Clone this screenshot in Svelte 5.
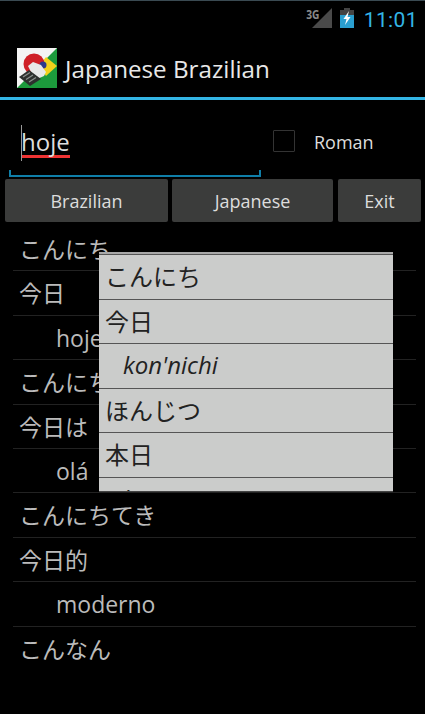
<script>
  const rows = [
    { text: 'こんにち' },
    { text: '今日' },
    { text: 'hoje', sub: true },
    { text: 'こんにちは' },
    { text: '今日は' },
    { text: 'olá', sub: true },
    { text: 'こんにちてき' },
    { text: '今日的' },
    { text: 'moderno', sub: true },
    { text: 'こんなん', last: true }
  ];
  const popup = [
    { text: 'こんにち' },
    { text: '今日' },
    { text: "kon'nichi", roman: true },
    { text: 'ほんじつ' },
    { text: '本日' },
    { text: 'honjitsu', roman: true }
  ];
</script>

<div class="screen">
  <header class="status">
    <span class="net">3G</span>
    <svg class="signal" width="20" height="20" viewBox="0 0 20 20"><path d="M20 0V20H0Z" fill="#4a4a4a" /></svg>
    <svg class="battery" width="14" height="20" viewBox="0 0 14 20">
      <rect x="4" y="0" width="6" height="2" fill="#444" />
      <rect x="0" y="2" width="14" height="6" fill="#444" />
      <rect x="0" y="7" width="14" height="13" fill="#2a9fd0" />
      <path d="M9 3 3.5 11H6.5L5 17 10.5 9H7.5Z" fill="#fff" />
    </svg>
    <span class="clock">11:01</span>
  </header>

  <div class="titlebar">
    <svg class="logo" width="40" height="40" viewBox="0 0 40 40">
      <rect width="40" height="40" fill="#f4f4f4" />
      <path d="M40 0V40H0Z" fill="#1c9a3c" />
      <path d="M29 9 40 18 29 28 22 18Z" fill="#f2d21c" />
      <circle cx="17" cy="16" r="10.5" fill="#cf2027" />
      <circle cx="26" cy="17" r="3.5" fill="#2b3a8c" />
      <path d="M11 18 16 14 24 17 29 24 27 28 18 32Z" fill="#e8e8e8" />
      <path d="M2 29 12 22 24 31 13 38Z" fill="#2d302e" />
      <path d="M6 29 13 24.5M9 31.5 16 27M12 34 19 29.5" stroke="#8a8f8c" stroke-width="1.3" fill="none" />
    </svg>
    <span class="apptitle">Japanese Brazilian</span>
  </div>

  <div class="search">
    <div class="field">
      <span class="query"><span class="caret"></span>hoje</span>
    </div>
    <span class="box"></span>
    <span class="roman">Roman</span>
  </div>

  <div class="buttons">
    <button class="btn b1">Brazilian</button>
    <button class="btn b2">Japanese</button>
    <button class="btn b3">Exit</button>
  </div>

  <div class="results">
    <ul class="list">
      {#each rows as row}
        <li class="row" class:sub={row.sub} class:last={row.last}>{row.text}</li>
      {/each}
    </ul>
    <div class="popup">
      {#each popup as item}
        <div class="pop-row" class:ital={item.roman}>{item.text}</div>
      {/each}
    </div>
  </div>
</div>

<style>
  :global(body) {
    margin: 0;
    background: #000;
  }
  .screen {
    width: 425px;
    height: 714px;
    background: #000;
    overflow: hidden;
    font-family: "Open Sans", "Noto Sans CJK JP", sans-serif;
    color: #fff;
  }
  .status {
    height: 37px;
    display: flex;
    align-items: flex-start;
    justify-content: flex-end;
    padding: 7px 7px 0 0;
    border-top: 1px solid #3a4a52;
    box-sizing: border-box;
  }
  .net { font-size: 12px; font-weight: 700; color: #8a8a8a; line-height: 11px; margin: 1px -9px 0 0; transform: scaleX(0.85); }
  .signal { margin-right: 8px; }
  .battery { margin-right: 10px; }
  .clock { font-family: Roboto, sans-serif; font-size: 21px; line-height: 24px; color: #33b5e5; letter-spacing: 0.4px; }
  .titlebar {
    height: 63px;
    box-sizing: border-box;
    display: flex;
    align-items: center;
    padding: 2px 0 0 17px;
    border-bottom: 3px solid #33b5e5;
  }
  .logo { margin-right: 8px; }
  .apptitle { font-size: 24.2px; color: #e8e8e8; }
  .search {
    height: 79px;
    display: flex;
    align-items: flex-start;
  }
  .field {
    width: 252px;
    height: 77px;
    margin-left: 9px;
    box-sizing: border-box;
    border: 2px solid #0f7ea8;
    border-top: 0;
    border-image: linear-gradient(to bottom, transparent 0, transparent 70px, #0f7ea8 70px) 2;
    padding: 29px 0 0 10px;
  }
  .query {
    position: relative;
    display: inline-block;
    font-size: 24px;
    line-height: 26px;
    color: #ddd;
    border-bottom: 3px solid #e33;
  }
  .caret {
    position: absolute;
    left: 0;
    top: -4px;
    width: 1px;
    height: 36px;
    background: #999;
  }
  .box {
    width: 20px;
    height: 20px;
    margin: 30px 0 0 12px;
    border: 1px solid #333;
    border-radius: 1px;
  }
  .roman { font-size: 18px; color: #ddd; margin: 30px 0 0 19px; }
  .buttons {
    display: flex;
    gap: 4px;
    padding: 0 4px 0 5px;
  }
  .btn {
    height: 43px;
    border: 0;
    border-radius: 2px;
    background: #3b3c3b;
    color: #ddd;
    font: 18px "Open Sans", sans-serif;
    padding: 0;
  }
  .b1 { width: 163px; }
  .b2 { width: 161px; }
  .b3 { width: 83px; margin-left: 1px; }
  .results {
    position: relative;
    margin-top: 5px;
  }
  .list {
    list-style: none;
    margin: 0;
    padding: 0 9px 0 13px;
  }
  .row {
    height: 44.4px;
    box-sizing: border-box;
    padding: 6px 0 0 6px;
    font-size: 23px;
    line-height: 32px;
    color: #bbb;
    border-bottom: 1px solid #222;
  }
  .row.sub { padding-left: 43px; }
  .row.last { border-bottom: 0; }
  .popup {
    position: absolute;
    left: 99px;
    top: 25px;
    width: 294px;
    height: 240px;
    overflow: hidden;
    background: #cbcccb;
    border-top: 2px solid #a8a8a8;
    border-bottom: 1px solid #444;
    box-sizing: border-box;
  }
  .pop-row {
    height: 44.5px;
    box-sizing: border-box;
    padding: 6px 0 0 6px;
    font-size: 24px;
    line-height: 32px;
    color: #222;
    border-top: 1px solid #555;
  }
  .ital {
    padding: 5px 0 0 24px;
    font-style: italic;
    font-size: 24px;
  }
</style>
